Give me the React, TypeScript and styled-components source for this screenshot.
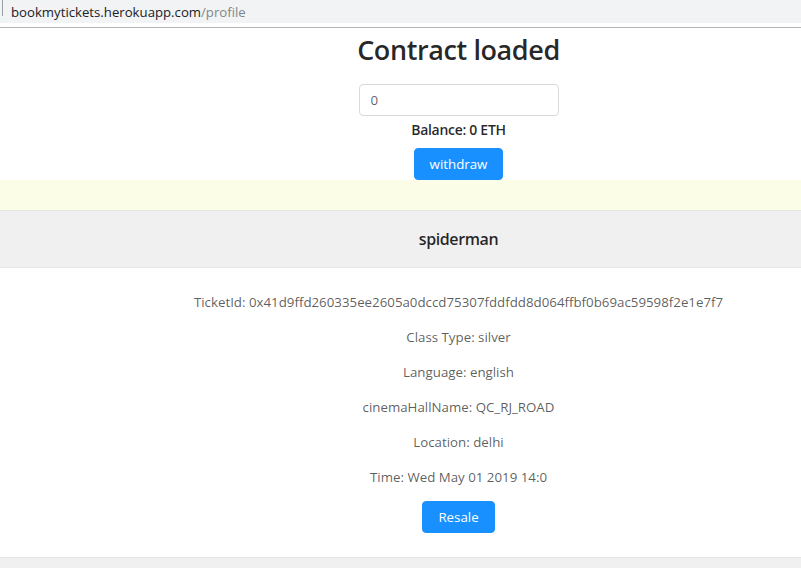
import React from "react";
import styled, { createGlobalStyle } from "styled-components";

const GlobalStyle = createGlobalStyle`
  html, body {
    margin: 0;
    padding: 0;
    background: #ffffff;
    overflow: hidden;
  }
  body {
    font-family: "Open Sans", "Noto Sans", sans-serif;
    -webkit-font-smoothing: antialiased;
  }
  * { box-sizing: border-box; }
`;

const Frame = styled.div`
  width: 801px;
  height: 568px;
  overflow: hidden;
  display: flex;
  flex-direction: column;
`;

const AddressBar = styled.div`
  height: 23px;
  background: #f1f3f4;
  display: flex;
  align-items: center;
  padding-left: 2px;
  font-size: 13.2px;
  color: #202124;
  flex-shrink: 0;
`;

const Caret = styled.span`
  width: 1px;
  height: 16px;
  background: #9aa0a6;
  margin-right: 8px;
  align-self: flex-start;
`;

const UrlPath = styled.span`
  color: #80868b;
`;

const ChromeDivider = styled.div`
  margin-top: 4px;
  height: 1px;
  background: #b4b4b4;
  flex-shrink: 0;
`;

const Page = styled.div`
  width: 917px;
  text-align: center;
  color: rgba(0, 0, 0, 0.65);
  font-size: 13.3px;
  line-height: 21px;
  flex: 1;
  display: flex;
  flex-direction: column;
`;

const ContractPanel = styled.section`
  display: flex;
  flex-direction: column;
  align-items: center;
  padding-top: 5px;
`;

const Title = styled.h1`
  margin: 0 0 17px;
  font-size: 27px;
  line-height: 34px;
  font-weight: 600;
  letter-spacing: -0.4px;
  color: rgba(0, 0, 0, 0.85);
`;

const AmountInput = styled.input`
  width: 200px;
  height: 32px;
  padding: 4px 11px;
  border: 1px solid #d9d9d9;
  border-radius: 4px;
  font-family: inherit;
  font-size: 13.3px;
  color: rgba(0, 0, 0, 0.65);
  outline: none;
`;

const Balance = styled.div`
  margin: 3px 0 8px;
  font-weight: 600;
  font-size: 14px;
  letter-spacing: -0.3px;
  color: rgba(0, 0, 0, 0.85);
`;

const PrimaryButton = styled.button`
  height: 32px;
  padding: 0 15px;
  border: 1px solid #1890ff;
  border-radius: 4px;
  background: #1890ff;
  color: #ffffff;
  font-family: inherit;
  font-size: 13.3px;
  cursor: pointer;
`;

const NoticeBand = styled.div`
  height: 30px;
  background: #fbfde6;
`;

const TicketCard = styled.article`
  display: flex;
  flex-direction: column;
`;

const CardHead = styled.div`
  height: 58px;
  border-top: 1px solid #e6e6e6;
  border-bottom: 1px solid #e6e6e6;
  background: #f0f0f0;
  display: flex;
  align-items: center;
  justify-content: center;
  font-size: 16px;
  font-weight: 600;
  letter-spacing: -0.4px;
  color: rgba(0, 0, 0, 0.85);
`;

const CardBody = styled.div`
  padding: 24px 0 24px;
  display: flex;
  flex-direction: column;
  align-items: center;
`;

const Detail = styled.p`
  margin: 0 0 14px;

  &:last-of-type {
    margin-bottom: 13px;
  }
`;

const NextCard = styled.div`
  flex: 1;
  border-top: 1px solid #e6e6e6;
  background: #f0f0f0;
`;

const details = [
  "TicketId: 0x41d9ffd260335ee2605a0dccd75307fddfdd8d064ffbf0b69ac59598f2e1e7f7",
  "Class Type: silver",
  "Language: english",
  "cinemaHallName: QC_RJ_ROAD",
  "Location: delhi",
  "Time: Wed May 01 2019 14:0",
];

export default function App() {
  return (
    <Frame>
      <GlobalStyle />
      <AddressBar>
        <Caret />
        bookmytickets.herokuapp.com<UrlPath>/profile</UrlPath>
      </AddressBar>
      <ChromeDivider />
      <Page>
        <ContractPanel>
          <Title>Contract loaded</Title>
          <AmountInput defaultValue="0" />
          <Balance>Balance: 0 ETH</Balance>
          <PrimaryButton>withdraw</PrimaryButton>
        </ContractPanel>
        <NoticeBand />
        <TicketCard>
          <CardHead>spiderman</CardHead>
          <CardBody>
            {details.map((d) => (
              <Detail key={d}>{d}</Detail>
            ))}
            <PrimaryButton>Resale</PrimaryButton>
          </CardBody>
        </TicketCard>
        <NextCard />
      </Page>
    </Frame>
  );
}
